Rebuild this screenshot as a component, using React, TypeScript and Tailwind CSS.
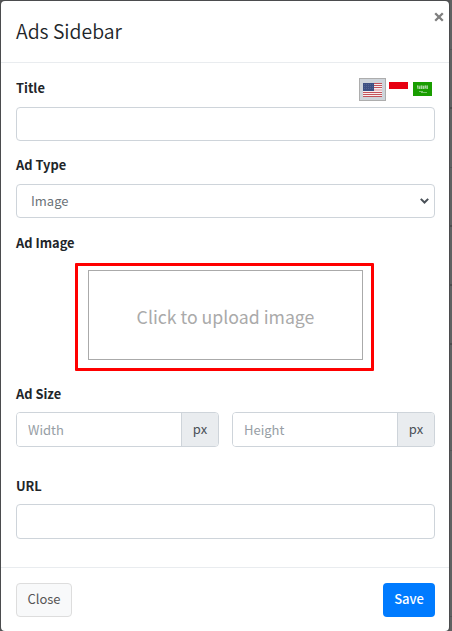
import React from "react";

const label = "block h-5 text-[12.85px] leading-5 font-bold text-[#212529] whitespace-nowrap";
const field = "block w-full rounded-[4px] border border-[#ced4da] bg-white outline-none";

function UsFlag() {
  return (
    <svg width="19" height="14" viewBox="0 0 19 14" shapeRendering="crispEdges">
      <rect width="19" height="14" fill="#f6eff0" />
      {[0, 2, 4, 9, 11, 13].map((y) => (
        <rect key={y} y={y} width="19" height="1" fill="#c4525a" />
      ))}
      <rect y="6" width="19" height="2" fill="#e6bfc4" />
      <rect width="11" height="8" fill="#3c4f83" />
      {[1, 3, 5].map((y) => (
        <path key={y} d={`M1 ${y + 0.5}H10`} stroke="#53658f" strokeDasharray="1 1" />
      ))}
    </svg>
  );
}

function IndonesiaFlag() {
  return (
    <svg width="19" height="14" viewBox="0 0 19 14" shapeRendering="crispEdges">
      <rect width="19" height="14" fill="#fff" />
      <rect width="19" height="7" fill="#e70011" />
    </svg>
  );
}

function SaudiFlag() {
  return (
    <svg width="19" height="14" viewBox="0 0 19 14">
      <rect width="19" height="14" fill="#199d00" />
      <rect x="4" y="3.5" width="11" height="3.5" fill="#6dbb5d" />
      <path d="M4.5 3.5v2M6.5 4.5v2.5M8.5 3.5v3.5M10.5 4v3M12.5 3.5v2.5M14.3 3.5v3.5" stroke="#b0dca7" strokeWidth=".9" />
      <path d="M6 9.5h4M8 10.5h6" stroke="#a5d89c" strokeWidth=".7" />
    </svg>
  );
}

function SizeInput({ placeholder }: { placeholder: string }) {
  return (
    <div className="flex h-[35px] w-[203px] overflow-hidden rounded-[4px] border border-[#ced4da]">
      <input
        placeholder={placeholder}
        className="w-[164px] bg-white px-[11px] text-[13px] text-[#495057] outline-none placeholder:text-[#979ea5]"
      />
      <span className="flex flex-1 items-center justify-center border-l border-[#ced4da] bg-[#e9ecef] pb-[2px] text-[13px] leading-5 text-[#495057]">
        px
      </span>
    </div>
  );
}

// Table rows of the dimmed page, visible past the dialog's right edge.
function Backdrop() {
  return (
    <div className="absolute inset-y-0 right-0 flex w-[2px] flex-col bg-[#606162]">
      <i className="h-[50px] border-b border-[#535455]" />
      <i className="h-[59px] border-b-2 border-[#4c4d4e]" />
      <i className="h-[59px] border-b border-[#535455]" />
      <i className="h-[59px] border-b-2 border-[#4c4d4e]" />
      <i className="h-[59px] border-b-2 border-[#4c4d4e]" />
      <i className="h-[59px] border-b-2 border-[#4c4d4e]" />
      <i className="h-[106px] border-b border-[#535455]" />
      <i className="h-[166px] border-b border-[#535455]" />
    </div>
  );
}

export default function App() {
  return (
    <div className="relative h-[631px] w-[452px] overflow-hidden bg-[#555657] pt-px pl-px font-['Noto_Sans_CJK_SC','Source_Sans_Pro',sans-serif]">
      <Backdrop />
      <div className="relative flex h-[630px] w-[448px] flex-col rounded-[4px] bg-white shadow-[0_0_0_1px_#4b4c4e]">
        <header className="flex h-[62px] shrink-0 items-center border-b border-[#e9ecef] px-[15px] pb-[2px]">
          <h1 className="text-[19.4px] leading-7 font-[350] text-[#212529]">Ads Sidebar</h1>
          <button className="absolute top-[11px] right-[5px] flex h-[10px] w-[10px] items-center justify-center" aria-label="Close dialog">
            <svg width="10" height="10" viewBox="0 0 10 10">
              <path d="M1.2 1.2l7.6 7.6M8.8 1.2l-7.6 7.6" stroke="#7f7f7f" strokeWidth="2.3" />
            </svg>
          </button>
        </header>

        <main className="flex h-[504px] shrink-0 flex-col pt-[14px] pr-[14px] pl-[15px]">
          <div className="flex h-[24px] items-start justify-between">
            <label className={`${label} mt-px`}>Title</label>
            <div className="mt-px flex pr-[3px]">
              <span className="flex h-[23px] w-[27px] items-center justify-center border border-[#adadad] bg-[#ced4da]">
                <UsFlag />
              </span>
              <span className="mt-1 ml-[3px]"><IndonesiaFlag /></span>
              <span className="mt-1 ml-[5px]"><SaudiFlag /></span>
            </div>
          </div>
          <input className={`${field} mt-[6px] h-[34px] shrink-0`} />

          <label className={`${label} mt-[14px]`}>Ad Type</label>
          <div className={`${field} mt-[9px] flex h-[34px] shrink-0 items-center justify-between pr-[5px] pl-[14px] text-[13px] leading-5 text-[#6b7278]`}>
            <span>Image</span>
            <svg width="9" height="6" viewBox="0 0 9 6">
              <path d="M.8.9l3.7 3.6L8.2.9" fill="none" stroke="#495057" strokeWidth="2" />
            </svg>
          </div>

          <label className={`${label} mt-[15px]`}>Ad Image</label>
          <div className="mt-[10px] ml-[59px] h-[108px] w-[299px] shrink-0 rounded-[1px] border-[3px] border-[#ff0000] pt-1 pl-[10px]">
            <button className="flex h-[90px] w-[275px] items-center justify-center border border-[#aaaaaa] pt-[2px] text-[17.7px] text-[#aaaaaa]">
              Click to upload image
            </button>
          </div>

          <label className={`${label} mt-[13px]`}>Ad Size</label>
          <div className="mt-[8px] flex justify-between">
            <SizeInput placeholder="Width" />
            <SizeInput placeholder="Height" />
          </div>

          <label className={`${label} mt-[29px]`}>URL</label>
          <input className={`${field} mt-[8px] h-[35px] shrink-0`} />
        </main>

        <footer className="flex flex-1 items-start justify-between border-t border-[#e9ecef] pt-[15px] pr-[14px] pl-[15px]">
          <button className="h-[34px] w-[56px] rounded-[4px] border border-[#dddddd] bg-[#f8f9fa] pb-[2px] text-[13px] leading-5 text-[#555555]">Close</button>
          <button className="h-[34px] w-[52px] rounded-[4px] bg-[#007bff] pb-[2px] text-[13px] leading-5 font-medium text-white">Save</button>
        </footer>
      </div>
    </div>
  );
}
